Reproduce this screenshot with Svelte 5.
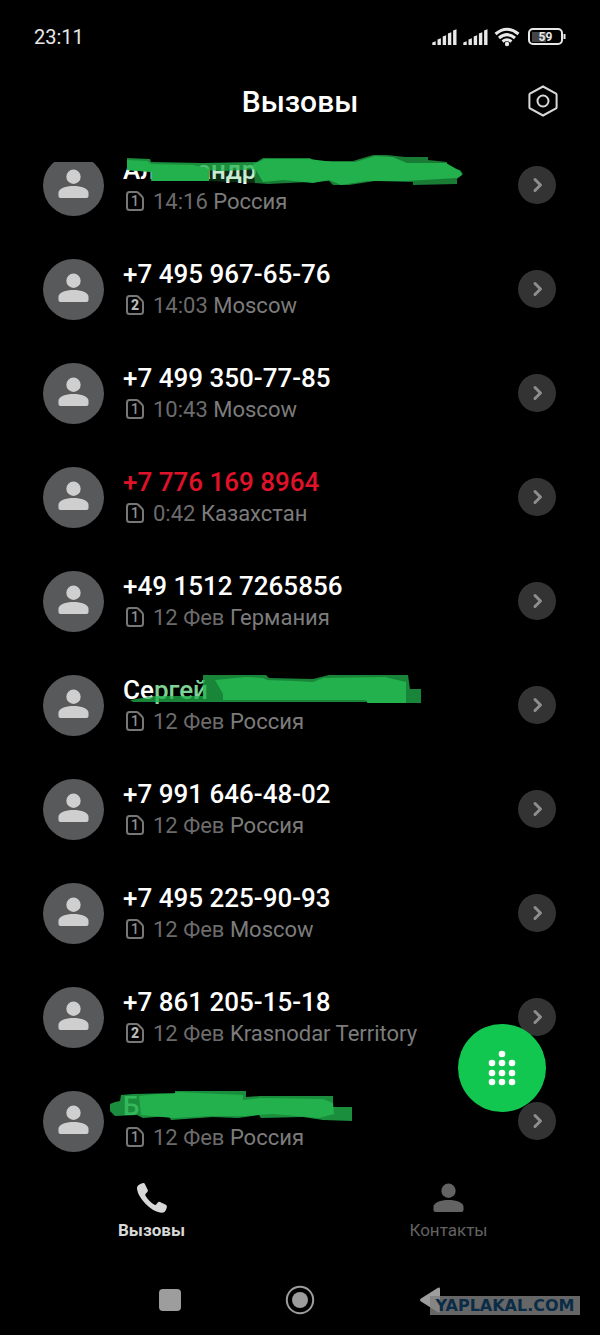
<script lang="ts">
  interface Call {
    readonly id: number;
    readonly name: string;
    readonly rest?: string;
    readonly sim: 1 | 2;
    readonly time: string;
    readonly place: string;
    readonly missed?: boolean;
    readonly marker?: Stroke[];
  }

  interface Stroke {
    d: string;
    opacity: number;
  }

  const calls: Call[] = [
    {
      id: 1, name: 'Александр', sim: 1, time: '14:16', place: 'Россия',
      marker: [
        { d: 'M4 4L27 5L28 8L80 9L140 8V15L100 17L82 16V27H28V18L4 16Z', opacity: 0.8 },
        { d: 'M84 16L132 15V29L84 27Z', opacity: 0.25 },
        { d: 'M130 10L140 4H187L192 7H230L250 1L264 1L282 3H305V6L324 8V13L337 16L340 20L334 25V30L290 31V28L252 27L226 31H210L206 27L145 30L132 29Z', opacity: 0.7 },
        { d: 'M4 6L24 7L28 10L70 11L86 15V27H29V18L4 16Z', opacity: 1 },
        { d: 'M130 11L141 5H186L210 8H232L252 2L270 3L284 9L323 9L337 17L339 21L334 24L284 27L244 27L218 31L206 26L190 29L160 26L140 28Z', opacity: 1 },
      ],
    },
    { id: 2, name: '+7 495 967-65-76', sim: 2, time: '14:03', place: 'Moscow' },
    { id: 3, name: '+7 499 350-77-85', sim: 1, time: '10:43', place: 'Moscow' },
    { id: 4, name: '+7 776 169 8964', sim: 1, time: '0:42', place: 'Казахстан', missed: true },
    { id: 5, name: '+49 1512 7265856', sim: 1, time: '12 Фев', place: 'Германия' },
    {
      id: 6, name: 'Се', rest: 'ргей', sim: 1, time: '12 Фев', place: 'Россия',
      marker: [
        { d: 'M7 26L32 22L80 22V1H143L146 4L190 5L206 1H285L287 15H298V29H244V28H10Z', opacity: 0.75 },
        { d: 'M92 6L122 3L140 4L144 6L172 7L190 8L200 4L262 3L283 8V29H245L243 26H100V20Z', opacity: 1 },
      ],
    },
    { id: 7, name: '+7 991 646-48-02', sim: 1, time: '12 Фев', place: 'Россия' },
    { id: 8, name: '+7 495 225-90-93', sim: 1, time: '12 Фев', place: 'Moscow' },
    { id: 9, name: '+7 861 205-15-18', sim: 2, time: '12 Фев', place: 'Krasnodar Territory' },
    {
      id: 10, name: '', rest: 'Б', sim: 1, time: '12 Фев', place: 'Россия',
      marker: [
        { d: 'M-13 14L-8 12L-3 11L-2 5L10 4L52 3V1H123V7L137 6H210V17H229V31L200 30L180 27L138 28L136 25L115 28L90 27L48 30L46 26L20 28L14 25L-8 26L-13 21Z', opacity: 0.8 },
        { d: 'M16 6L34 4L50 4L54 2L120 5V10L138 8L200 9L210 13L211 24L196 28L150 24L122 26L88 26L50 28L18 25Z', opacity: 1 },
      ],
    },
  ];

  const bars = [0, 1, 2, 3, 4];
  const dots = [[10, 0], [0, 9], [10, 9], [20, 9], [0, 19], [10, 19], [20, 19], [0, 28], [10, 28], [20, 28]];

  let tab = $state('calls');
</script>

{#snippet person()}
  <svg class="person" viewBox="0 0 32 30" aria-hidden="true">
    <circle cx="16" cy="7.5" r="7.4" />
    <path d="M.5 24C.5 19.5 8 17 16 17s15.500 2.500 15.500 7v3.500q0 2-2 2h-27q-2 0-2-2z" />
  </svg>
{/snippet}

{#snippet signal()}
  <svg width="25" height="18" viewBox="0 0 25 18" aria-hidden="true">
    {#each bars as b}
      <path d="M{b * 5.2 + 0.3} 17V{14.5 - b * 3}l3.400-1.300V17z" />
    {/each}
  </svg>
{/snippet}

<main>
  <header>
    <div class="status">
      <span>23:11</span>
      <div class="status-icons">
        {@render signal()}
        {@render signal()}
        <svg class="wifi" width="26" height="20" viewBox="0 0 26 20" aria-hidden="true">
          <path d="M1.500 7Q13-2.500 24.500 7M5 11Q13 4.300 21 11M8.500 14.500Q13 11 17.500 14.500" />
          <circle cx="13" cy="17" r="2.200" />
        </svg>
        <svg class="battery" width="38" height="18" viewBox="0 0 38 18" aria-hidden="true">
          <rect class="level" x="4" y="4" width="14" height="10" />
          <rect class="case" x="1" y="1" width="33" height="15" rx="4" />
          <rect class="cap" x="35.500" y="6" width="2" height="5" />
          <text x="17.500" y="13" text-anchor="middle">59</text>
        </svg>
      </div>
    </div>
    <div class="title">
      <h1>Вызовы</h1>
      <button class="settings" aria-label="Настройки">
        <svg width="30" height="32" viewBox="0 0 30 32">
          <path d="M15 1.500L28 8.500Q28.600 9 28.600 9.800V22.200Q28.600 23 28 23.500L15 30.500L2 23.500Q1.400 23 1.400 22.200V9.800Q1.400 9 2 8.500Z" />
          <circle cx="15" cy="16" r="5.500" />
        </svg>
      </button>
    </div>
  </header>

  <div class="content">
    <ul class="calls">
      {#each calls as call (call.id)}
        <li class="call">
          <div class="avatar">{@render person()}</div>
          <div class="info">
            <div class="name" class:missed={call.missed}>
              {call.name}{#if call.rest}<span class="tinted">{call.rest}</span>{/if}
              {#if call.marker}
                <svg class="marker" width="345" height="31" viewBox="0 0 345 31" aria-hidden="true">
                  {#each call.marker as stroke}
                    <path d={stroke.d} opacity={stroke.opacity} />
                  {/each}
                </svg>
              {/if}
            </div>
            <div class="details">
              <svg class="sim" width="18" height="20" viewBox="0 0 18 20">
                <path d="M3.500 1H10Q11.500 1 12.500 2L16 5.500Q17 6.500 17 8V16.500Q17 19 14.500 19H3.500Q1 19 1 16.500V3.500Q1 1 3.500 1Z" />
                <text class:second={call.sim === 2} x="9" y="15" text-anchor="middle">{call.sim}</text>
              </svg>
              <span><span class="time">{call.time}</span> {call.place}</span>
            </div>
          </div>
          <button class="more" aria-label="Подробнее">
            <svg width="12" height="16" viewBox="0 0 12 16"><path d="M4 2.500L9.500 8L4 13.500" /></svg>
          </button>
        </li>
      {/each}
    </ul>
    <button class="dial" aria-label="Набрать номер">
      <svg width="28" height="36" viewBox="-4 -4 28 36">
        {#each dots as [x, y]}
          <circle cx={x} cy={y} r="3.300" />
        {/each}
      </svg>
    </button>
  </div>

  <nav class="tabs">
    <button class="tab" class:active={tab === 'calls'} onclick={() => (tab = 'calls')}>
      <svg class="phone" width="32" height="32" viewBox="0 0 32 32" aria-hidden="true">
        <path d="M2 3.500Q4 1.500 7 1Q8.500 .8 9 2.200L11.800 8Q12.200 9.200 11.300 10L9.500 12Q9 13 9.600 14Q13.500 20 18.500 22.700Q19.500 23.200 20.200 22.400L22 20.300Q22.800 19.500 24 20L29.800 22.700Q31.200 23.400 30.900 25Q30.400 28 28.500 30Q27.300 31 24 30.600Q17 29.300 9.700 22Q2 14 1 7Q.8 4.800 2 3.500Z" />
      </svg>
      Вызовы
    </button>
    <button class="tab" class:active={tab === 'contacts'} onclick={() => (tab = 'contacts')}>
      {@render person()}
      Контакты
    </button>
  </nav>

  <footer>
    <button aria-label="Недавние">
      <svg width="22" height="22" viewBox="0 0 22 22"><rect width="22" height="22" rx="4" /></svg>
    </button>
    <button aria-label="Домой">
      <svg width="30" height="30" viewBox="0 0 30 30">
        <circle class="ring" cx="15" cy="15" r="13.200" />
        <circle cx="15" cy="15" r="8" />
      </svg>
    </button>
    <button aria-label="Назад">
      <svg width="20" height="26" viewBox="0 0 20 26"><path d="M1 11.500L18 .8Q20 0 20 2V24Q20 26 18 25.200L1 14.500Q-1 13 1 11.500Z" /></svg>
    </button>
    <span class="watermark">YAPLAKAL.COM</span>
  </footer>
</main>

<style>
  :global(body) {
    margin: 0;
    background: #000;
  }

  main {
    font-family: Roboto, sans-serif;
    background: #000;
    color: #fff;
    min-height: 100vh;
  }

  button {
    background: none;
    border: none;
    padding: 0;
    font: inherit;
    color: inherit;
    cursor: pointer;
    display: flex;
    align-items: center;
    justify-content: center;
  }

  svg {
    display: block;
    flex: none;
    fill: currentColor;
  }

  header {
    position: relative;
    z-index: 1;
    background: #000;
    padding-bottom: 34px;
  }

  .status {
    display: flex;
    justify-content: space-between;
    align-items: center;
    height: 74px;
    padding: 0 34px;
    font-size: 20px;
    color: #e8e8e8;
  }

  .status-icons {
    display: flex;
    align-items: center;
    gap: 6px;
  }

  .wifi path {
    fill: none;
    stroke: currentColor;
    stroke-width: 3;
  }

  .battery {
    margin-left: 2px;
  }

  .battery .case {
    fill: none;
    stroke: currentColor;
    stroke-width: 2;
  }

  .battery .level {
    fill: #444;
  }

  .battery text {
    font-size: 12px;
    font-weight: 700;
  }

  .title {
    display: grid;
    grid-template-columns: 1fr auto 1fr;
    align-items: center;
    height: 54px;
    padding: 0 42px;
  }

  h1 {
    grid-column: 2;
    margin: 0;
    font-size: 30px;
    font-weight: 500;
  }

  .settings {
    justify-self: end;
    color: #d8d8d8;
  }

  .settings svg {
    fill: none;
    stroke: currentColor;
    stroke-width: 2;
  }

  .content {
    position: relative;
    margin-top: -29px;
  }

  .calls {
    list-style: none;
    margin: 0;
    padding: 0;
  }

  .call {
    display: flex;
    align-items: center;
    height: 104px;
    padding: 0 44px 0 43px;
  }

  .avatar {
    display: flex;
    justify-content: center;
    box-sizing: border-box;
    width: 61px;
    height: 61px;
    padding-top: 14px;
    border-radius: 50%;
    background: #58595b;
    color: #cfcfcf;
  }

  .person {
    width: 31px;
    height: 30px;
  }

  .info {
    flex: 1;
    margin-left: 19px;
    padding-top: 2px;
    line-height: 31px;
    white-space: nowrap;
  }

  .name {
    position: relative;
    height: 31px;
    font-size: 26px;
    font-weight: 500;
  }

  .missed {
    color: #e0122a;
  }

  .tinted {
    color: #7fd394;
  }

  .marker {
    position: absolute;
    left: 0;
    top: -1px;
    z-index: 2;
    overflow: visible;
    fill: #22b14c;
  }

  .details {
    display: flex;
    align-items: center;
    gap: 9px;
    padding-left: 3px;
    font-size: 22px;
    color: #7c7c7c;
  }

  .time {
    color: #6c6c6c;
  }

  .sim {
    margin-bottom: 2px;
  }

  .sim path {
    fill: none;
    stroke: #777;
    stroke-width: 2;
  }

  .sim text {
    font-size: 14px;
    font-weight: 500;
    fill: #909090;
  }

  .sim text.second {
    font-weight: 900;
    fill: #b8b8b8;
  }

  .more {
    width: 38px;
    height: 38px;
    border-radius: 50%;
    background: #333;
    color: #8e8e8e;
  }

  .more svg {
    fill: none;
    stroke: currentColor;
    stroke-width: 3;
    stroke-linecap: round;
    stroke-linejoin: round;
  }

  .dial {
    position: absolute;
    right: 54px;
    bottom: 61px;
    width: 88px;
    height: 88px;
    border-radius: 50%;
    background: #12c750;
  }

  .tabs {
    display: grid;
    grid-template-columns: 1fr 1fr;
    height: 91px;
    padding: 0 3px;
  }

  .tab {
    flex-direction: column;
    justify-content: flex-start;
    gap: 4px;
    padding-top: 9px;
    font-size: 17px;
    line-height: 24px;
    color: #636363;
  }

  .tab svg {
    height: 32px;
  }

  .tab.active {
    color: #d8d8d8;
    font-weight: 700;
  }

  footer {
    position: relative;
    display: flex;
    justify-content: center;
    height: 71px;
    color: #9d9d9d;
  }

  footer button {
    width: 130px;
  }

  .ring {
    fill: none;
    stroke: currentColor;
    stroke-width: 2;
  }

  .watermark {
    position: absolute;
    right: 20px;
    bottom: 20px;
    width: 150px;
    background: rgba(128, 128, 128, 0.8);
    color: #0b2c47;
    font: 700 16px/19px "DejaVu Sans", sans-serif;
    text-align: center;
  }
</style>
